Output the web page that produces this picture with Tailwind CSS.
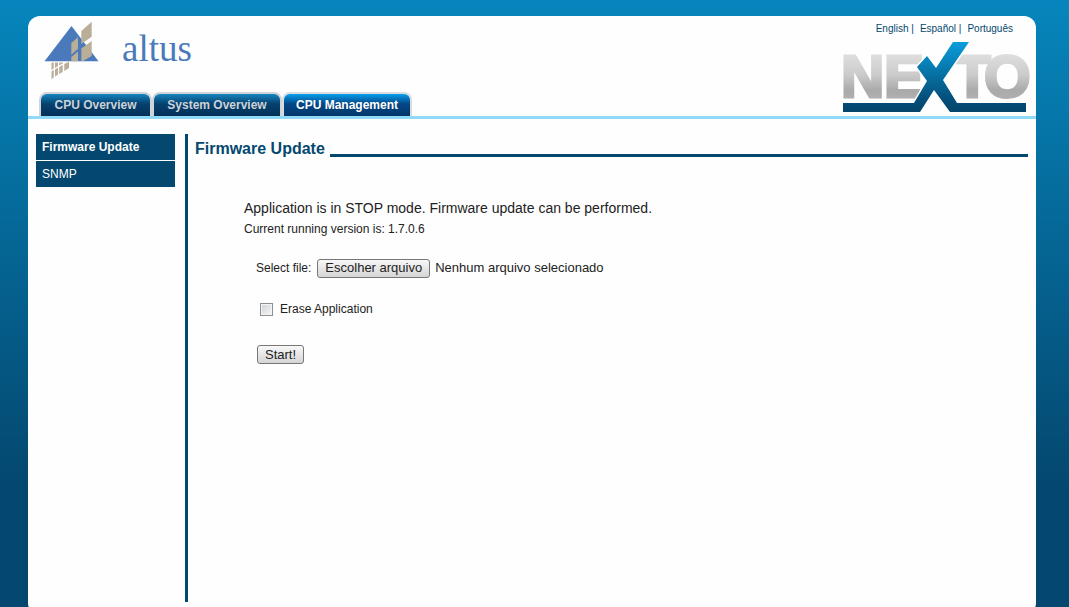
<!DOCTYPE html>
<html lang="en">
<head>
<meta charset="utf-8">
<title>Firmware Update</title>
<script src="https://cdn.jsdelivr.net/npm/@tailwindcss/browser@4"></script>
</head>
<body class="font-['Liberation_Sans',Arial,sans-serif] text-xs text-[#222]">
<div class="flex h-screen flex-col overflow-hidden bg-[#04486f] bg-linear-to-b from-[#0686bd] to-[#04486f] to-80% pt-4 pr-[33px] pl-7">
  <div class="-mb-2 flex grow flex-col rounded-xl bg-[#fefefe]">
    <header class="flex h-[103px] items-end justify-between border-b-3 border-[#8fdaf9]">
      <div class="flex flex-col self-stretch justify-between pl-[11px]">
        <svg class="mt-1 ml-[5px] h-[60px] w-[154px]" viewBox="44 20 154 60" role="img" aria-label="altus">
          <path d="M44.500 61.300L71.500 26L98.500 61.300Z" fill="#4a7abb"/>
          <g fill="#b9ae98">
            <path d="M71.300 43L78 37.300V48.700L71.300 54.700Z"/>
            <path d="M81.300 31L91.700 21.700V36.700L81.300 44Z"/>
            <path d="M71.300 57L78 51.500V61.300H71.300Z"/>
            <path d="M81.300 48.500L91.700 41V56L82.500 61.300H81.300Z"/>
            <path d="M51.500 63L53.700 62V68.500L51.500 70ZM51.500 71.500L53.700 70V77.500L51.500 79ZM55 62.500H58V66L55 68ZM55 69.500L58 67.500V74.500L55 76.500ZM59.200 62.500H62.700V63.500L59.200 65.500ZM59.200 67L62.700 65V72L59.200 74ZM64.300 64L69 61.800V68L64.300 71Z"/>
          </g>
          <text x="122" y="61" font-size="37" fill="#4a7abb" font-family="Liberation Serif, serif">altus</text>
        </svg>
        <nav class="flex text-xs font-bold" aria-label="Main">
          <a href="#" class="flex h-6 w-[113px] items-center justify-center rounded-t-lg border-2 border-b-0 border-[#d0d4d8] bg-linear-to-b from-[#1787c0] via-[#06416f] via-45% to-[#033158] text-[#ccd2d8]">CPU Overview</a>
          <a href="#" class="flex h-6 w-[130px] items-center justify-center rounded-t-lg border-2 border-b-0 border-[#d0d4d8] bg-linear-to-b from-[#1787c0] via-[#06416f] via-45% to-[#033158] text-[#ccd2d8]">System Overview</a>
          <a href="#" aria-current="page" class="flex h-6 w-[130px] items-center justify-center rounded-t-lg border-2 border-b-0 border-[#d9dde0] bg-linear-to-b from-[#08a0ee] via-[#034787] via-45% to-[#03376a] text-white">CPU Management</a>
        </nav>
      </div>
      <div class="flex flex-col items-end self-stretch pt-[7px] pr-[5px]">
        <div class="mr-[18px] flex gap-1.5 text-[10px] leading-3 text-[#04486f]">
          <span><a href="#">English</a> |</span> <span><a href="#">Español</a> |</span> <a href="#">Português</a>
        </div>
        <svg class="mt-[7px] h-[71px] w-[188px] overflow-visible" viewBox="843 42 188 71" role="img" aria-label="NEXTO">
          <defs>
            <linearGradient id="silver" gradientUnits="userSpaceOnUse" x1="0" y1="55" x2="0" y2="99"><stop offset="0" stop-color="#dedede"/><stop offset=".45" stop-color="#cbcbcb"/><stop offset=".8" stop-color="#aaa"/><stop offset="1" stop-color="#b0b0b0"/></linearGradient>
            <linearGradient id="blue" gradientUnits="userSpaceOnUse" x1="0" y1="42" x2="0" y2="112"><stop offset="0" stop-color="#0a9ddb"/><stop offset=".8" stop-color="#04507b"/><stop offset="1" stop-color="#04446b"/></linearGradient>
          </defs>
          <g fill="url(#silver)" stroke="url(#silver)" stroke-width="3" font-family="Liberation Sans, Arial, sans-serif" font-weight="700" font-size="60">
            <text x="841" y="97">N</text><text x="884" y="97">E</text><text x="954" y="97">T</text><text x="984" y="97">O</text>
          </g>
          <path d="M843 103H914L927 81L917 67L927 56L936 68L953 42H969L943 80L957 103H1026V112H950L934 90L920 112H843Z" fill="url(#blue)" stroke="#fefefe" stroke-width="3" paint-order="stroke"/>
        </svg>
      </div>
    </header>
    <div class="flex grow pt-[15px] pr-2 pl-2">
      <nav class="flex w-[139px] flex-col gap-px self-start text-white" aria-label="Sections">
        <a href="#" aria-current="page" class="bg-[#04486f] px-1.5 leading-[26px] font-bold">Firmware Update</a>
        <a href="#" class="bg-[#04486f] px-1.5 leading-[26px]">SNMP</a>
      </nav>
      <main class="mb-[13px] ml-2.5 grow border-l-3 border-[#04486f] pl-[7px]">
        <h1 class="flex gap-[5px] text-base leading-[30px] font-bold text-[#04486f]">Firmware Update<span class="mt-5 h-[3px] grow bg-[#04486f]"></span></h1>
        <form class="pt-[34px] pl-[49px]">
          <p class="text-sm leading-5">Application is in STOP mode. Firmware update can be performed.</p>
          <p class="leading-[22px]">Current running version is: 1.7.0.6</p>
          <div class="mt-[18px] flex h-5 items-center pl-3">
            <label for="file">Select file:</label>
            <button id="file" type="button" class="ml-1.5 h-[19px] rounded-[3px] border border-[#777] bg-linear-to-b from-[#f8f8f8] to-[#d5d5d5] px-[7px] text-[13px] leading-4 text-[#222]">Escolher arquivo</button>
            <span class="ml-[5px] text-[13px]">Nenhum arquivo selecionado</span>
          </div>
          <div class="mt-[21px] flex h-5 items-center pl-4">
            <input id="erase" type="checkbox" class="size-[13px] appearance-none border border-[#8e8f8f] bg-linear-to-br from-[#cfd3d8] to-[#f6f6f6] shadow-[inset_0_0_0_1px_#f4f4f4] checked:bg-[#04486f]">
            <label for="erase" class="ml-[7px]">Erase Application</label>
          </div>
          <button type="submit" class="mt-[26px] ml-[13px] block h-[19px] rounded-[3px] border border-[#777] bg-linear-to-b from-[#f8f8f8] to-[#d5d5d5] px-[7px] text-[13px] leading-4 text-[#222]">Start!</button>
        </form>
      </main>
    </div>
  </div>
</div>
</body>
</html>
